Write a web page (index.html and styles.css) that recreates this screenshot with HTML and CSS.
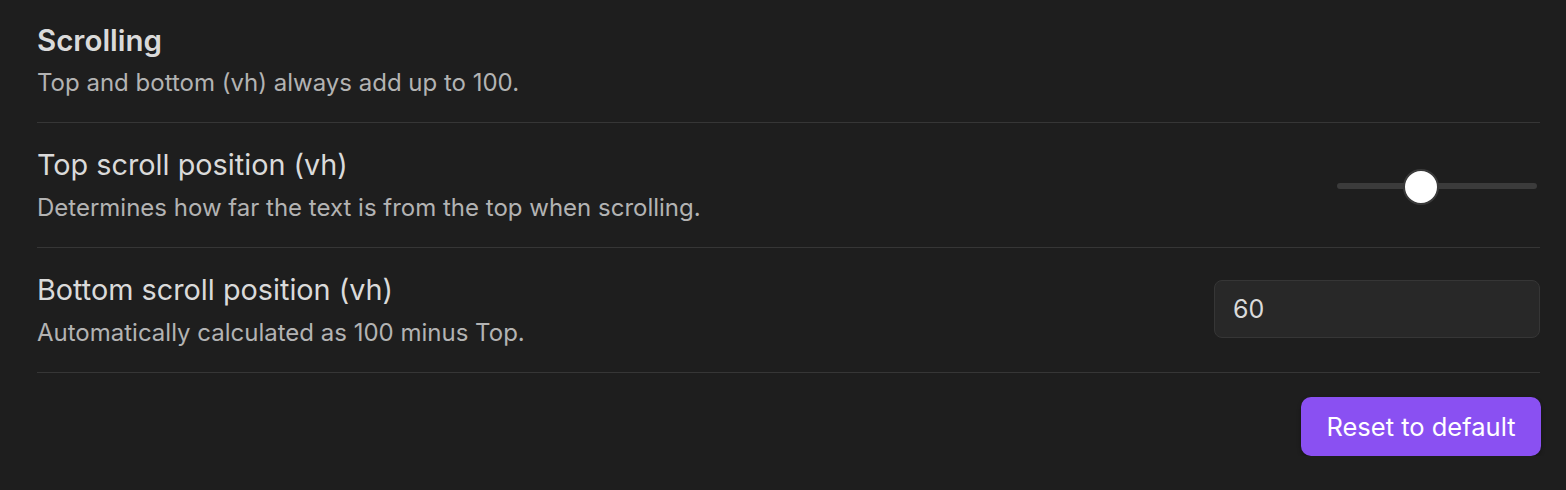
FILE: index.html
```html
<!DOCTYPE html>
<html>
<head>
<meta charset="utf-8">
<link rel="stylesheet" href="styles.css">
</head>
<body>
<div class="panel">
  <div class="heading-item">
    <div class="heading">Scrolling</div>
    <div class="desc">Top and bottom (vh) always add up to 100.</div>
  </div>
  <div class="item">
    <div class="info">
      <div class="name">Top scroll position (vh)</div>
      <div class="desc">Determines how far the text is from the top when scrolling.</div>
    </div>
    <div class="control">
      <div class="slider">
        <div class="track"></div>
        <div class="thumb"></div>
      </div>
    </div>
  </div>
  <div class="item">
    <div class="info">
      <div class="name">Bottom scroll position (vh)</div>
      <div class="desc">Automatically calculated as 100 minus Top.</div>
    </div>
    <div class="control">
      <div class="input">60</div>
    </div>
  </div>
  <div class="footer">
    <button class="btn">Reset to default</button>
  </div>
</div>
</body>
</html>
```
FILE: styles.css
```css
html, body {
  margin: 0;
  padding: 0;
  background: #1e1e1e;
}
body {
  font-family: Inter, "Noto Sans", sans-serif;
  color: #dadada;
}
.panel {
  padding: 0 26px 0 37px;
}
.heading-item {
  padding: 23px 0 24px;
  border-bottom: 1px solid #363636;
}
.heading {
  font-size: 29.5px;
  font-weight: 600;
  line-height: 34px;
  color: #dadada;
}
.desc {
  font-size: 24px;
  line-height: 31px;
  color: #b3b3b3;
  margin-top: 10px;
}
.item {
  display: flex;
  align-items: center;
  padding: 25px 0 24px;
  border-bottom: 1px solid #363636;
}
.info {
  flex: 1;
}
.name {
  font-size: 28.8px;
  line-height: 34px;
  color: #dadada;
}
.item .desc {
  margin-top: 10px;
}
.control {
  display: flex;
  justify-content: flex-end;
}
.slider {
  position: relative;
  width: 200px;
  height: 36px;
  margin-right: 3px;
}
.track {
  position: absolute;
  left: 0;
  right: 0;
  top: 15px;
  height: 6px;
  border-radius: 3px;
  background: #3b3b3b;
}
.thumb {
  position: absolute;
  left: 66px;
  top: 1px;
  width: 32px;
  height: 32px;
  border-radius: 50%;
  background: #ffffff;
  border: 2px solid #3a3a3a;
  box-sizing: content-box;
}
.input {
  width: 326px;
  height: 58px;
  margin-top: -4px;
  box-sizing: border-box;
  background: #282828;
  border: 1px solid #363636;
  border-radius: 8px;
  font-size: 25px;
  line-height: 56px;
  padding-left: 18px;
  color: #dadada;
}
.footer {
  display: flex;
  justify-content: flex-end;
  padding-top: 24px;
}
.btn {
  font-family: Inter, "Noto Sans", sans-serif;
  background: #8a50f2;
  color: #ffffff;
  border: none;
  border-radius: 10px;
  width: 240px;
  height: 59px;
  font-size: 25.5px;
  margin-right: -1px;
  box-shadow: 0 2px 4px rgba(0,0,0,0.3);
}
```
